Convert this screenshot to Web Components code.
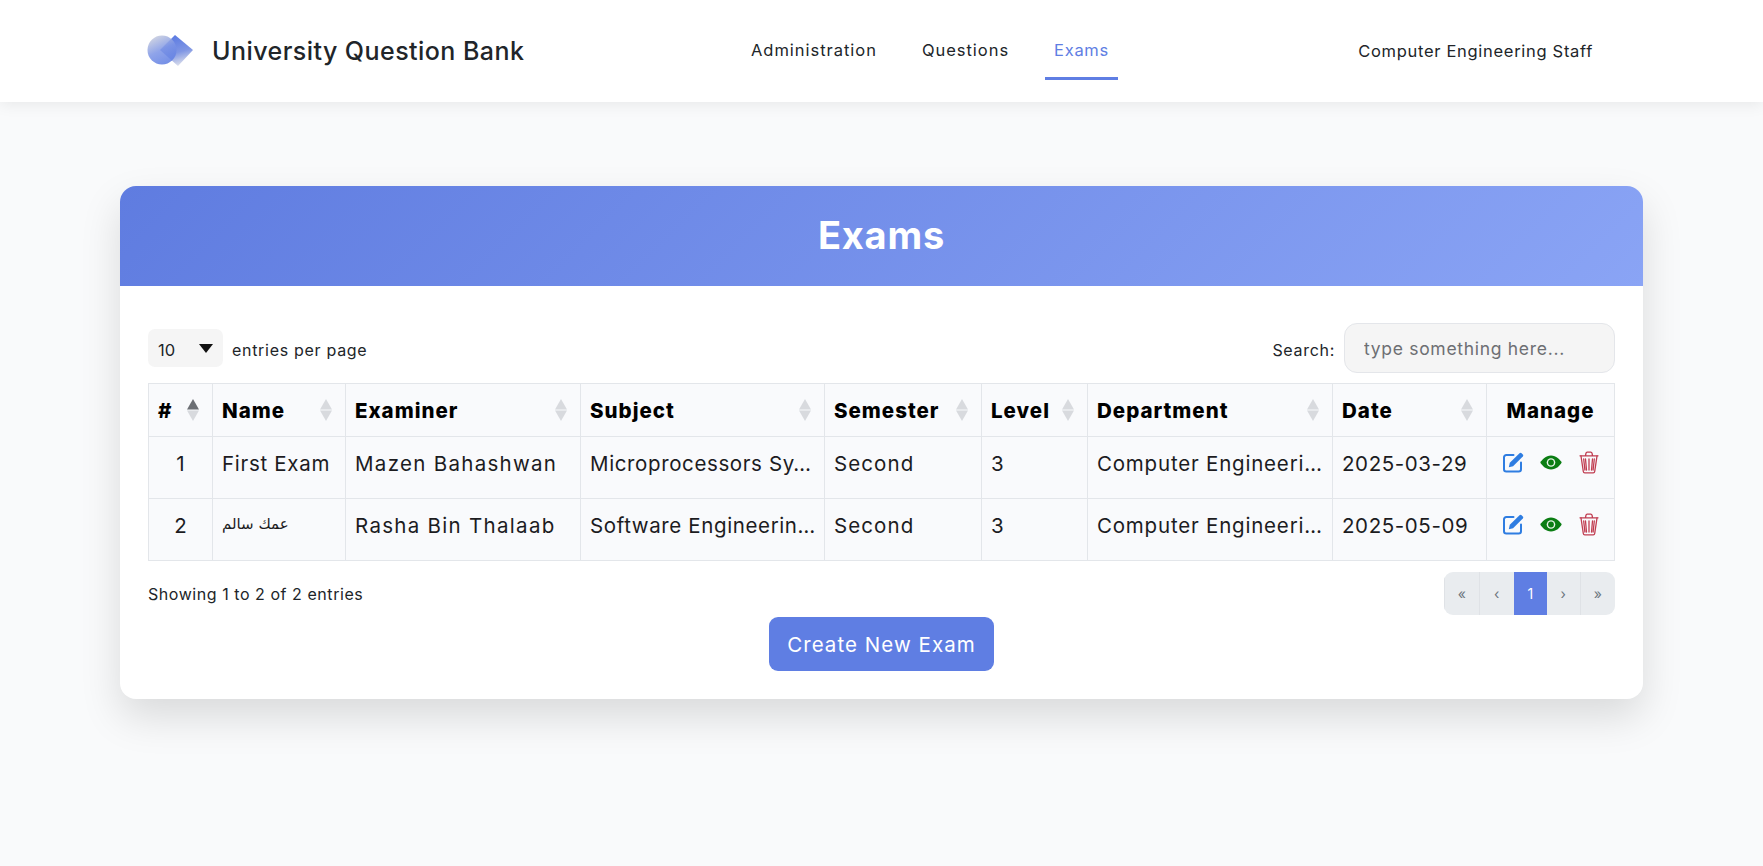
<!DOCTYPE html>
<html lang="en">
<head>
<meta charset="utf-8">
<title>University Question Bank</title>
<style>
  html, body { margin: 0; height: 100%; }
  body { background: #f9fafb; font-family: Inter, "Liberation Sans", sans-serif; color: #212529; }
</style>
</head>
<body>
<app-header>
  <nav-link>Administration</nav-link>
  <nav-link>Questions</nav-link>
  <nav-link active>Exams</nav-link>
</app-header>
<exams-page></exams-page>

<script>
class AppHeader extends HTMLElement {
  connectedCallback() {
    this.attachShadow({ mode: 'open' });
    this.shadowRoot.innerHTML = `
      <style>
        :host { display: flex; align-items: center; height: 102px; padding: 0 170px 0 147px; background: #fff; box-shadow: 0 2px 15px rgba(0,0,0,.08); position: relative; }
        .brand { display: flex; align-items: center; gap: 17px; font-size: 25px; font-weight: 500; color: #212529; letter-spacing: .45px; white-space: nowrap; width: 595px; flex: none; }
        svg { width: 48px; height: 34px; flex: none; }
        nav { display: flex; gap: 27px; align-self: flex-start; }
        .user { margin-left: auto; font-size: 16.5px; letter-spacing: .7px; color: #212529; white-space: nowrap; }
      </style>
      <div class="brand">
        <svg viewBox="0 0 48 34">
          <defs>
            <linearGradient id="lc" x1=".1" y1="0" x2=".6" y2="1"><stop offset="0" stop-color="#d4d6dc"/><stop offset=".55" stop-color="#7d95e6"/><stop offset="1" stop-color="#5f7ee3"/></linearGradient>
            <linearGradient id="ld" x1=".4" y1="0" x2=".7" y2="1"><stop offset="0" stop-color="#5a79e2"/><stop offset=".55" stop-color="#7f96e4"/><stop offset="1" stop-color="#e6e7ec"/></linearGradient>
          </defs>
          <path d="M28 1 L46 16 L31 32 L13 16 Z" fill="url(#ld)"/>
          <circle cx="15" cy="16" r="14.500" fill="url(#lc)" opacity=".86"/>
        </svg>
        <span>University Question Bank</span>
      </div>
      <nav><slot></slot></nav>
      <div class="user">Computer Engineering Staff</div>
    `;
  }
}
customElements.define('app-header', AppHeader);

class NavLink extends HTMLElement {
  connectedCallback() {
    this.attachShadow({ mode: 'open' });
    this.shadowRoot.innerHTML = `
      <style>
        :host { display: block; padding: 0 9px; height: 48px; line-height: 42px; margin-top: 29px; font-size: 16.5px; letter-spacing: .97px; color: #212529; border-bottom: 3px solid transparent; white-space: nowrap; cursor: pointer; }
        :host([active]) { color: #5f7ee3; border-bottom-color: #5f7ee3; letter-spacing: .7px; }
      </style>
      <slot></slot>
    `;
  }
}
customElements.define('nav-link', NavLink);

class SortIcon extends HTMLElement {
  connectedCallback() {
    this.attachShadow({ mode: 'open' });
    const up = this.getAttribute('dir') === 'asc' ? '#6c6f74' : '#d8dade';
    this.shadowRoot.innerHTML = `
      <style>:host { display: inline-flex; flex: none; } svg { width: 12px; height: 22px; }</style>
      <svg viewBox="0 0 12 22"><polygon points="6,0 12,10.500 0,10.500" fill="${up}"/><polygon points="0,11.500 12,11.500 6,22" fill="#d8dade"/></svg>
    `;
  }
}
customElements.define('sort-icon', SortIcon);

class RowActions extends HTMLElement {
  connectedCallback() {
    this.attachShadow({ mode: 'open' });
    this.shadowRoot.innerHTML = `
      <style>
        :host { display: flex; align-items: center; justify-content: space-between; height: 24px; padding: 0 6px 0 7px; }
        svg { display: block; }
      </style>
      <svg width="21" height="21" viewBox="0 0 21 21" fill="none" stroke="#2f7de1">
        <path d="M18 10.500v6.700a2.300 2.300 0 0 1-2.300 2.300H3.300A2.300 2.300 0 0 1 1 17.200V5.300A2.300 2.300 0 0 1 3.300 3H10.500" stroke-width="2" stroke-linecap="round"/>
        <path d="M5.800 15.200l1-4.400L16.500 1.200a1.500 1.500 0 0 1 2.100 0l1.200 1.200a1.500 1.500 0 0 1 0 2.100l-9.700 9.700z" fill="#2f7de1" stroke="none"/>
      </svg>
      <svg width="22" height="15" viewBox="0 0 22 15" style="margin-left:-2px">
        <path d="M11 .5C5.800 .5 2 4.500 .3 7.500 2 10.500 5.800 14.500 11 14.500s9-4 10.700-7C20 4.500 16.200 .5 11 .5z" fill="#0b7d13"/>
        <circle cx="11" cy="7.500" r="4.300" fill="#e8f3e8"/>
        <circle cx="11" cy="7.500" r="2.900" fill="#0b7d13"/>
      </svg>
      <svg width="20" height="23" viewBox="0 0 20 23" fill="none" stroke="#c03c50" stroke-width="1.300" stroke-linecap="round" stroke-linejoin="round">
        <path d="M1 4.800 19 4.800M6.500 4.500 7 2.200A1.300 1.300 0 0 1 8.300 1.200h3.400A1.300 1.300 0 0 1 13 2.200l.5 2.300"/>
        <path d="M2 5l2.300 15.500a1.500 1.500 0 0 0 1.500 1.300h8.400a1.500 1.500 0 0 0 1.500-1.300L18 5"/>
        <path d="M6.500 8l1 11M10 8v11M13.500 8l-1 11M4.700 8l1.200 11M15.300 8l-1.200 11"/>
      </svg>
    `;
  }
}
customElements.define('row-actions', RowActions);

class ExamsTable extends HTMLElement {
  connectedCallback() {
    this.attachShadow({ mode: 'open' });
    const columns = [
      ['#', 64, 'asc'], ['Name', 133], ['Examiner', 235], ['Subject', 244],
      ['Semester', 157], ['Level', 106], ['Department', 245], ['Date', 154]
    ];
    // widths of the text differ per column, keep them close to the original
    const spacing = [0, .7, 1.3, .62, 1.1, 0, .8, .6];
    const rows = [
      ['1', 'First Exam', 'Mazen Bahashwan', 'Microprocessors Sy…', 'Second', '3', 'Computer Engineeri…', '2025-03-29'],
      ['2', 'عمك سالم', 'Rasha Bin Thalaab', 'Software Engineerin…', 'Second', '3', 'Computer Engineeri…', '2025-05-09']
    ];
    const cellClass = (v, i) => i === 0 ? 'num' : v === 'عمك سالم' ? 'ar' : '';
    this.shadowRoot.innerHTML = `
      <style>
        :host { display: block; }
        table { width: 1467px; table-layout: fixed; border-collapse: collapse; background: #f9fafc; color: #1c1c1f; font-size: 20.500px; }
        th, td { border: 1px solid #e3e6ea; padding: 0 9px; overflow: hidden; white-space: nowrap; text-align: left; }
        th { height: 52px; padding: 0 13px 0 9px; font-weight: 800; font-size: 20.500px; letter-spacing: 1px; color: #000; }
        th.plain { text-align: center; padding: 0 9px; }
        th div { display: flex; align-items: center; justify-content: space-between; }
        td { height: 62px; vertical-align: top; padding-top: 12px; padding-bottom: 0; line-height: 30px; box-sizing: border-box; }
        td.num { text-align: center; }
        td.ar { font-family: "DejaVu Sans", "Noto Sans", sans-serif; font-size: 15px; line-height: 26px; }
        td.manage { padding: 13px 9px 0; }
      </style>
      <table>
        <colgroup>${columns.map(c => `<col style="width:${c[1]}px">`).join('')}<col></colgroup>
        <thead><tr>
          ${columns.map(c => `<th><div><span>${c[0]}</span><sort-icon dir="${c[2] || ''}"></sort-icon></div></th>`).join('')}
          <th class="plain">Manage</th>
        </tr></thead>
        <tbody>
          ${rows.map(r => `<tr>
            ${r.map((v, i) => `<td class="${cellClass(v, i)}" style="letter-spacing:${v === 'عمك سالم' ? 0 : spacing[i]}px">${v}</td>`).join('')}
            <td class="manage"><row-actions></row-actions></td>
          </tr>`).join('')}
        </tbody>
      </table>
    `;
  }
}
customElements.define('exams-table', ExamsTable);

class PagerBar extends HTMLElement {
  connectedCallback() {
    this.attachShadow({ mode: 'open' });
    const items = ['«', '‹', '1', '›', '»'];
    this.shadowRoot.innerHTML = `
      <style>
        :host { display: flex; height: 43px; border-radius: 9px; overflow: hidden; background: #e9ecef; font-size: 14px; color: #6c757d; }
        span { width: 34px; display: flex; align-items: center; justify-content: center; border-left: 1px solid #dfe2e6; }
        span:first-child { border-left: 0; width: 36px; }
        span:nth-child(4), span:nth-child(5) { width: 33px; }
        .on { background: #5f7ee3; color: #fff; border-left: 0; width: 36px; }
        .on + span { border-left: 0; }
      </style>
      ${items.map(i => `<span class="${i === '1' ? 'on' : ''}">${i}</span>`).join('')}
    `;
  }
}
customElements.define('pager-bar', PagerBar);

class ExamsPage extends HTMLElement {
  connectedCallback() {
    this.attachShadow({ mode: 'open' });
    this.shadowRoot.innerHTML = `
      <style>
        :host { display: block; padding: 84px 120px 0; }
        .card { background: #fff; border-radius: 16px; box-shadow: 0 18px 40px rgba(0,0,0,.13); overflow: hidden; height: 513px; }
        h1 { margin: 0; height: 100px; line-height: 98px; text-align: center; color: #fff; font-size: 38px; font-weight: 700; letter-spacing: .8px; background: linear-gradient(135deg, #5f7ce0, #8aa4f5); }
        .body { padding: 37px 28px 0 28px; }
        .controls { display: flex; justify-content: space-between; align-items: center; height: 50px; margin-bottom: 10px; font-size: 16px; letter-spacing: .7px; color: #212529; }
        .side { display: flex; align-items: center; gap: 9px; }
        .side > span, .select > span { padding-top: 3px; }
        .select { width: 75px; height: 38px; box-sizing: border-box; background: #f5f5f5; border-radius: 7px; padding: 0 10px; display: flex; align-items: center; justify-content: space-between; font-size: 16.500px; letter-spacing: 0; }
        .caret { width: 0; height: 0; border: 7px solid transparent; border-top: 9px solid #111; border-bottom: 0; }
        input { width: 271px; height: 50px; box-sizing: border-box; border: 1px solid #e4e6ea; border-radius: 13px; background: #f5f5f5; padding: 0 19px; font: inherit; font-size: 17.500px; letter-spacing: .7px; }
        input::placeholder { color: #6d6f73; opacity: 1; }
        .foot { display: flex; justify-content: space-between; align-items: center; margin-top: 11px; font-size: 16px; letter-spacing: .55px; }
        .actions { display: flex; justify-content: center; margin-top: 2px; }
        button { width: 225px; height: 54px; border: 0; border-radius: 9px; background: #5f7ee3; color: #fff; font: inherit; font-size: 20.500px; letter-spacing: 1.050px; }
      </style>
      <section class="card">
        <h1>Exams</h1>
        <div class="body">
          <div class="controls">
            <div class="side"><div class="select"><span>10</span><i class="caret"></i></div><span>entries per page</span></div>
            <label class="side"><span>Search:</span><input placeholder="type something here..."></label>
          </div>
          <exams-table></exams-table>
          <div class="foot"><span>Showing 1 to 2 of 2 entries</span><pager-bar></pager-bar></div>
          <div class="actions"><button>Create New Exam</button></div>
        </div>
      </section>
    `;
  }
}
customElements.define('exams-page', ExamsPage);
</script>
</body>
</html>
